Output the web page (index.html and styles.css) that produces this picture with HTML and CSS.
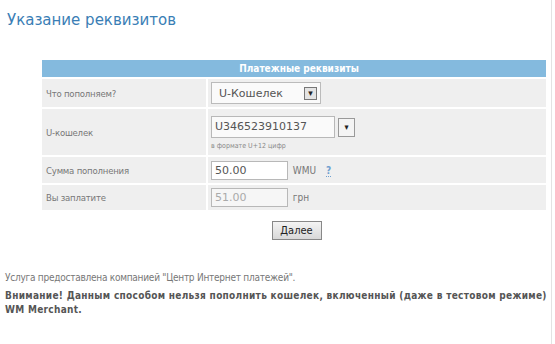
FILE: index.html
```html
<!DOCTYPE html>
<html lang="ru">
<head>
<meta charset="utf-8">
<title>Указание реквизитов</title>
<link rel="stylesheet" href="styles.css">
</head>
<body>
  <div class="page">
    <h1 class="title">Указание реквизитов</h1>

    <form class="pay">
      <table class="req">
        <tr>
          <th colspan="2">Платежные реквизиты</th>
        </tr>
        <tr class="first">
          <td class="label">Что пополняем?</td>
          <td class="value">
            <span class="select short">U-Кошелек <span class="arrow">&#9662;</span></span>
          </td>
        </tr>
        <tr>
          <td class="label">U-кошелек</td>
          <td class="value tall">
            <div class="combo">
              <span class="field wide">U346523910137</span>
              <span class="arrow">&#9662;</span>
            </div>
            <div class="hint">в формате U+12 цифр</div>
          </td>
        </tr>
        <tr>
          <td class="label">Сумма пополнения</td>
          <td class="value">
            <span class="field">50.00</span>
            <span class="unit">WMU</span>
            <a class="help" href="#">?</a>
          </td>
        </tr>
        <tr class="last">
          <td class="label">Вы заплатите</td>
          <td class="value">
            <span class="field disabled">51.00</span>
            <span class="unit">грн</span>
          </td>
        </tr>
      </table>

      <div class="actions">
        <button type="button" class="next">Далее</button>
      </div>
    </form>

    <p class="note">Услуга предоставлена компанией "Центр Интернет платежей".</p>
    <p class="warn">Внимание! Данным способом нельзя пополнить кошелек, включенный (даже в тестовом режиме) WM Merchant.</p>
  </div>
</body>
</html>
```

FILE: styles.css
```css
* {
  margin: 0;
  padding: 0;
  box-sizing: border-box;
}

body {
  background: #fff;
  font-family: "DejaVu Sans Condensed", "DejaVu Sans", Verdana, sans-serif;
  font-size: 10px;
  color: #555;
}

.page {
  width: 552px;
  min-height: 344px;
  border-right: 1px solid #e3e3e3;
  padding: 11px 0 0 5px;
}

.title {
  font-family: "DejaVu Sans", Verdana, sans-serif;
  font-weight: normal;
  font-size: 15px;
  color: #3a7eb5;
  padding-left: 2px;
  height: 49px;
}

.pay {
  padding-left: 37px;
}

.req {
  width: 504px;
  border-collapse: collapse;
  background: #efefef;
}

.req th {
  background: #84bade;
  color: #fff;
  font-weight: bold;
  height: 18px;
  padding: 0 0 0 10px;
  text-align: center;
  border-bottom: 1px solid #fff;
}

.req td {
  border-top: 2px solid #fff;
  vertical-align: middle;
}

.req .label {
  width: 165px;
  padding: 0 4px;
  border-right: 2px solid #fff;
  font-size: 9.5px;
  letter-spacing: -0.2px;
  color: #777;
}

.req .value {
  padding: 2px 3px;
  height: 28px;
}

.req .first .value {
  height: 30px;
}

.req .last .value {
  height: 26px;
}

.req .value.tall {
  padding: 7px 3px 5px;
}

.select {
  display: inline-flex;
  align-items: center;
  justify-content: space-between;
  width: 110px;
  height: 22px;
  padding: 0 3px 0 7px;
  border: 1px solid #bbb;
  background: #fafafa;
  font-family: "DejaVu Sans", Verdana, sans-serif;
  font-size: 11px;
  color: #555;
}

.arrow {
  display: inline-flex;
  align-items: center;
  justify-content: center;
  width: 13px;
  height: 13px;
  border: 1px solid #777;
  background: #e4e4e4;
  font-size: 9px;
  color: #222;
}

.combo {
  display: flex;
  align-items: center;
  gap: 3px;
}

.combo .arrow {
  width: 17px;
  height: 19px;
  border-color: #999;
  background: #f4f4f4;
}

.field {
  display: inline-block;
  width: 77px;
  height: 19px;
  line-height: 17px;
  padding: 0 3px;
  border: 1px solid #b8b8b8;
  background: #fff;
  font-family: "DejaVu Sans", Verdana, sans-serif;
  font-size: 11px;
  color: #555;
  vertical-align: middle;
}

.field.wide {
  width: 124px;
  height: 22px;
  line-height: 20px;
  background: #fafafa;
  color: #555;
}

.field.disabled {
  color: #aaa;
  background: #f6f6f6;
}

.hint {
  font-size: 7px;
  color: #888;
  margin-top: 4px;
}

.unit {
  margin-left: 2px;
  color: #777;
  vertical-align: middle;
}

.help {
  margin-left: 7px;
  color: #6fa0d0;
  font-weight: bold;
  text-decoration: none;
  border-bottom: 1px dotted #6fa0d0;
  vertical-align: middle;
}

.actions {
  display: flex;
  justify-content: center;
  padding: 11px 0 0 0;
  height: 61px;
}

.next {
  width: 50px;
  height: 19px;
  border: 1px solid #888;
  background: linear-gradient(#f4f4f4, #d8d8d8);
  font-family: "DejaVu Sans Condensed", "DejaVu Sans", sans-serif;
  font-size: 11px;
  color: #222;
}

.note {
  color: #777;
  line-height: 14px;
  letter-spacing: -0.25px;
}

.warn {
  font-weight: bold;
  color: #555;
  line-height: 14px;
  letter-spacing: 0.3px;
  margin-top: 4px;
}
```
